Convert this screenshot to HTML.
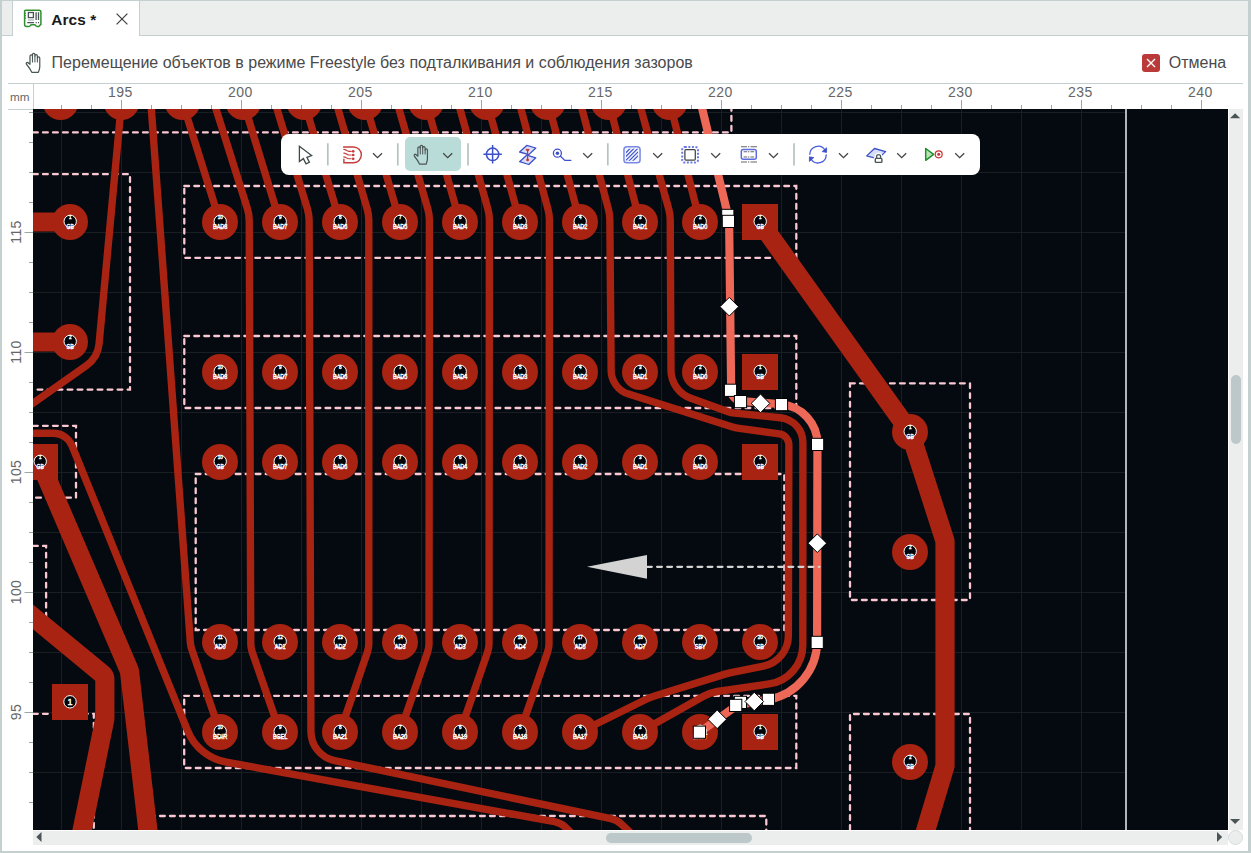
<!DOCTYPE html>
<html lang="ru">
<head>
<meta charset="utf-8">
<title>Arcs *</title>
<style>
*{box-sizing:border-box;margin:0;padding:0}
html,body{width:1251px;height:853px;overflow:hidden;background:#fff}
body{position:relative;font-family:"Liberation Sans",sans-serif;color:#444}
.abs{position:absolute}
.frame{left:0;top:0;width:1251px;height:853px;border-style:solid;border-color:#c4cfd0;border-width:1px 3px 2px 2px;pointer-events:none;z-index:9}
.tabbar{left:2px;top:1px;width:1246px;height:35px;background:#eceeed;border-bottom:1px solid #c4cfd0}
.tab{left:12px;top:1px;width:128px;height:35px;background:#fff;border-left:1px solid #c4cfd0;border-right:1px solid #c4cfd0}
  .tab .ttl{left:38.2px;top:9.8px;font-size:15.4px;letter-spacing:.1px;line-height:18px;font-weight:bold;color:#1a1a1a;white-space:nowrap}
.info{left:2px;top:36px;width:1246px;height:47px;background:#fff}
.info .msg{left:49.6px;top:18px;font-size:16px;line-height:18px;color:#4a4a4a;white-space:nowrap}
.info .cancel{left:1166.8px;top:18px;font-size:16px;line-height:18px;color:#4a4a4a;white-space:nowrap}
.info .xbtn{left:1140px;top:18px;width:18px;height:18px;border-radius:3px;background:#b93a38}
.hline{left:8px;top:83px;width:1235px;height:1px;background:#c4cfd0}
.cornerv{left:33px;top:84px;width:1px;height:25px;background:#c4cfd0}
.cornerh{left:8px;top:109px;width:25px;height:1px;background:#c4cfd0}
.cv{position:absolute;left:33px;top:109px}
.rul{position:absolute;left:0;top:0}
.vsb{left:1229px;top:109px;width:14px;height:721px;background:#eceeed}
.hsb{left:33px;top:831px;width:1195px;height:14px;background:#eceeed}
.vth{left:1231px;top:375px;width:10px;height:69px;border-radius:5px;background:#bcc8c9}
.hth{left:606px;top:833px;width:146px;height:10px;border-radius:5px;background:#bcc8c9}
.corner{left:1228px;top:830px;width:15px;height:15px;border-radius:50%;background:#eceeed;border:1px solid #d3dcdc}
.tb{left:281px;top:134px;width:698.5px;height:40.5px;background:#fff;border-radius:8px}
.tb .act{left:123.6px;top:3.4px;width:56.6px;height:33.8px;border-radius:5px;background:#badcd8}
.tb svg{position:absolute;left:0;top:0}
</style>
</head>
<body>
<div class="abs tabbar"></div>
<div class="abs tab">
  <svg class="abs" style="left:9.2px;top:7.3px" width="22" height="22" viewBox="0 0 22 22" fill="none">
    <path d="M3.6 2.3H16.9a2 2 0 0 1 2 2V16.4l-2.1 2.1H15.2c-.9 0-1.3-.4-1.6-1-.3-.5-.6-.8-1.2-.8H9.6c-.6 0-.9.3-1.2.8-.3.6-.7 1-1.6 1H4.6a2 2 0 0 1-2-2V3.3a1 1 0 0 1 1-1Z" stroke="#2e8f2e" stroke-width="1.5" fill="#fff"/>
    <path d="M2.6 5.3h1.3M2.6 7.7h1.3M2.6 10.1h1.3" stroke="#2e8f2e" stroke-width="1.2"/>
    <rect x="6.4" y="4.5" width="5" height="5.1" stroke="#4a5557" stroke-width="1.3"/>
    <path d="M14.1 4.3V11.9M16.5 4.3V11.9" stroke="#4a5557" stroke-width="1.3"/>
    <path d="M6 12h6" stroke="#9aa3a4" stroke-width="1"/>
    <path d="M5.2 14.7h6.8M13.6 14.7h1.2M16 14.7h1" stroke="#4a5557" stroke-width="1.2"/>
  </svg>
  <div class="abs ttl">Arcs *</div>
  <svg class="abs" style="left:102.4px;top:10.5px" width="14" height="14" viewBox="0 0 14 14"><path d="M1.6 1.6L12.4 12.4M12.4 1.6L1.6 12.4" stroke="#444" stroke-width="1.3" fill="none"/></svg>
</div>
<div class="abs info">
  <svg class="abs" style="left:21.5px;top:15px" width="19" height="24" viewBox="0 0 20 24" preserveAspectRatio="none" fill="none" stroke="#4a5656" stroke-width="1.3" stroke-linejoin="round" stroke-linecap="round">
    <path d="M6.3 13.2V5.2a1.3 1.3 0 0 1 2.6 0V3.7a1.3 1.3 0 0 1 2.6 0V5a1.3 1.3 0 0 1 2.6 0v2.2a1.25 1.25 0 0 1 2.5 0v8.6c0 2.2-.7 3.6-1.5 5.5H8.2C7 19 5 16 2.6 13.3c-.9-1.1.4-2.5 1.5-1.7L6.3 13.2Z" fill="#fff"/>
    <path d="M8.9 5.2V11M11.5 5V11M14.1 7.2V11" stroke-width="1.1"/>
  </svg>
  <div class="abs msg" id="msg">Перемещение объектов в режиме Freestyle без подталкивания и соблюдения зазоров</div>
  <div class="abs xbtn"><svg width="18" height="18" viewBox="0 0 18 18"><path d="M5 5L13 13M13 5L5 13" stroke="#fff" stroke-width="1.4" fill="none"/></svg></div>
  <div class="abs cancel">Отмена</div>
</div>
<div class="abs hline"></div>
<div class="abs cornerv"></div>
<div class="abs cornerh"></div>
<svg class="cv" width="1195" height="721" viewBox="33 109 1195 721"><rect x="33" y="109" width="1195" height="721" fill="#040a10"/><path d="M61.5 109V830M121.5 109V830M181.5 109V830M241.5 109V830M301.5 109V830M361.5 109V830M421.5 109V830M481.5 109V830M541.5 109V830M601.5 109V830M661.5 109V830M721.5 109V830M781.5 109V830M841.5 109V830M901.5 109V830M961.5 109V830M1021.5 109V830M1081.5 109V830M33 112.5H1126M33 172.5H1126M33 232.5H1126M33 292.5H1126M33 352.5H1126M33 412.5H1126M33 472.5H1126M33 532.5H1126M33 592.5H1126M33 652.5H1126M33 712.5H1126M33 772.5H1126" stroke="#181e21" stroke-width="1" fill="none"/><path d="M1126 109V830" stroke="#aeb6b7" stroke-width="2" fill="none"/><path d="M33 132.4H731.4V109M33 174.2H130V389.6H33M184.3 186H796.3V257.8H184.3ZM184.3 336H796.3V408H184.3ZM195.7 474H784.3V630H195.7ZM184.2 695.8H796.3V768H184.2ZM33 425.8H76V497.7H33M33 545.9H46.1V620M33 713.8H93.8V830M150 816H766.3V830M850 383.3H970V600H850ZM850 830V714H970V830" stroke="#fbc8d2" stroke-width="2.3" stroke-dasharray="4.8 5.2" stroke-linecap="round" fill="none"/><path d="M121.5 102L99.08 343.75A30 30 0 0 1 86.52 365.47L20 412.5M150.7 100L190.37 642.79A25 25 0 0 0 191.64 649.05L220 732M182.4 102L220 222M243.3 102L280 222M304.2 102L340 222M365.1 102L400 222M426 102L460 222M486.9 102L520 222M547.8 102L580 222M608.7 102L640 222M669.6 102L700 222M213.17 100L247.38 208.71A40 40 0 0 1 249.22 220.57L250.78 643.83A25 25 0 0 0 252.17 651.94L280 732M335.37 100L367.2 209.01A40 40 0 0 1 368.8 220.22L368.8 643.83A25 25 0 0 1 367.45 651.94L340 732M396.41 100L427.83 209.05A40 40 0 0 1 429.39 220.17L429 643.82A25 25 0 0 1 427.64 651.95L400 732M457.49 100L487.93 209.21A40 40 0 0 1 489.39 219.99L489 643.82A25 25 0 0 1 487.64 651.95L460 732M518.58 100L548.02 209.37A40 40 0 0 1 549.4 219.81L549 643.82A25 25 0 0 1 547.64 651.95L520 732M274.26 100L307.39 208.88A40 40 0 0 1 309.12 220.38L310.91 731.44A30 30 0 0 0 334.75 760.69L380 770.2L610.95 818.73A22 22 0 0 1 621.5 824.24L646 847.3M20 433.3L53.53 433.3A20 20 0 0 1 72.06 445.78L187.55 730.58A52 52 0 0 0 226.45 762.21L554.42 821.71A22 22 0 0 1 565.8 827.55L590 851M579.63 100L608.52 209.66A40 40 0 0 1 609.84 219.51L611.14 370.46A25 25 0 0 0 628.59 394.08L732.56 427.03A30 30 0 0 0 737.54 428.15L779.37 433.89A11 11 0 0 1 788.87 444.82L788.37 635.77A31 31 0 0 1 763.47 666.08L731.03 672.59A60 60 0 0 0 725.05 674.11L654.54 695.99A60 60 0 0 0 645.74 699.51L580 732M638.51 100L668.78 209.36A40 40 0 0 1 670.23 219.83L670.99 370.21A30 30 0 0 0 690.86 398.29L727.55 411.46A30 30 0 0 0 734.65 413.07L780.42 417.72A25 25 0 0 1 802.89 442.6L802.81 644.97A39.4 39.4 0 0 1 769.13 683.93L717.35 691.52A40 40 0 0 0 703.53 696.24L640 732" stroke="#a82311" stroke-width="7.4" fill="none" stroke-linecap="round" stroke-linejoin="round"/><path d="M20 222H70M20 342H70M20 606.1L102.3 674A7 7 0 0 1 104.85 679.4L104.85 718.29A7 7 0 0 1 104.71 719.69L78.9 846M40 462L128.83 669.36A10 10 0 0 1 129.57 672.15L149.6 845M760 222L910 432L945 541V766L921 846" stroke="#a82311" stroke-width="19.2" fill="none" stroke-linecap="round" stroke-linejoin="round"/><g fill="#a82311"><circle cx="60.6" cy="102" r="18"/><circle cx="121.5" cy="102" r="18"/><circle cx="182.4" cy="102" r="18"/><circle cx="243.3" cy="102" r="18"/><circle cx="304.2" cy="102" r="18"/><circle cx="365.1" cy="102" r="18"/><circle cx="426" cy="102" r="18"/><circle cx="486.9" cy="102" r="18"/><circle cx="547.8" cy="102" r="18"/><circle cx="608.7" cy="102" r="18"/><circle cx="669.6" cy="102" r="18"/><circle cx="220" cy="222" r="18"/><circle cx="280" cy="222" r="18"/><circle cx="340" cy="222" r="18"/><circle cx="400" cy="222" r="18"/><circle cx="460" cy="222" r="18"/><circle cx="520" cy="222" r="18"/><circle cx="580" cy="222" r="18"/><circle cx="640" cy="222" r="18"/><circle cx="700" cy="222" r="18"/><circle cx="220" cy="372" r="18"/><circle cx="280" cy="372" r="18"/><circle cx="340" cy="372" r="18"/><circle cx="400" cy="372" r="18"/><circle cx="460" cy="372" r="18"/><circle cx="520" cy="372" r="18"/><circle cx="580" cy="372" r="18"/><circle cx="640" cy="372" r="18"/><circle cx="700" cy="372" r="18"/><circle cx="220" cy="462" r="18"/><circle cx="280" cy="462" r="18"/><circle cx="340" cy="462" r="18"/><circle cx="400" cy="462" r="18"/><circle cx="460" cy="462" r="18"/><circle cx="520" cy="462" r="18"/><circle cx="580" cy="462" r="18"/><circle cx="640" cy="462" r="18"/><circle cx="700" cy="462" r="18"/><circle cx="220" cy="642" r="18"/><circle cx="280" cy="642" r="18"/><circle cx="340" cy="642" r="18"/><circle cx="400" cy="642" r="18"/><circle cx="460" cy="642" r="18"/><circle cx="520" cy="642" r="18"/><circle cx="580" cy="642" r="18"/><circle cx="640" cy="642" r="18"/><circle cx="700" cy="642" r="18"/><circle cx="220" cy="732" r="18"/><circle cx="280" cy="732" r="18"/><circle cx="340" cy="732" r="18"/><circle cx="400" cy="732" r="18"/><circle cx="460" cy="732" r="18"/><circle cx="520" cy="732" r="18"/><circle cx="580" cy="732" r="18"/><circle cx="640" cy="732" r="18"/><circle cx="700" cy="732" r="18"/><rect x="742" y="204" width="36" height="36"/><rect x="742" y="354" width="36" height="36"/><rect x="742" y="444" width="36" height="36"/><circle cx="760" cy="642" r="18"/><rect x="742" y="714" width="36" height="36"/><circle cx="70" cy="222" r="18"/><circle cx="70" cy="342" r="18"/><rect x="22" y="444" width="36" height="36"/><circle cx="910" cy="432" r="18"/><circle cx="910" cy="552" r="18"/><circle cx="910" cy="762" r="18"/><rect x="52" y="684" width="36" height="36"/></g><path d="M700.1 100L728.94 219.34A6 6 0 0 1 729.11 220.68L731.18 390.18A11 11 0 0 0 741.29 401.01L780.95 404.23A39.7 39.7 0 0 1 817.44 443.87L817.09 641.52A58.9 58.9 0 0 1 769.18 699.29L738.74 705.07A8 8 0 0 0 735.56 706.43L700 732" stroke="#ee6858" stroke-width="8.2" fill="none" stroke-linecap="round" stroke-linejoin="round"/><g fill="#02060a" stroke="#fff" stroke-width="1"><circle cx="220.2" cy="221.4" r="6.2"/><circle cx="280.2" cy="221.4" r="6.2"/><circle cx="340.2" cy="221.4" r="6.2"/><circle cx="400.2" cy="221.4" r="6.2"/><circle cx="460.2" cy="221.4" r="6.2"/><circle cx="520.2" cy="221.4" r="6.2"/><circle cx="580.2" cy="221.4" r="6.2"/><circle cx="640.2" cy="221.4" r="6.2"/><circle cx="700.2" cy="221.4" r="6.2"/><circle cx="220.2" cy="371.4" r="6.2"/><circle cx="280.2" cy="371.4" r="6.2"/><circle cx="340.2" cy="371.4" r="6.2"/><circle cx="400.2" cy="371.4" r="6.2"/><circle cx="460.2" cy="371.4" r="6.2"/><circle cx="520.2" cy="371.4" r="6.2"/><circle cx="580.2" cy="371.4" r="6.2"/><circle cx="640.2" cy="371.4" r="6.2"/><circle cx="700.2" cy="371.4" r="6.2"/><circle cx="220.2" cy="461.4" r="6.2"/><circle cx="280.2" cy="461.4" r="6.2"/><circle cx="340.2" cy="461.4" r="6.2"/><circle cx="400.2" cy="461.4" r="6.2"/><circle cx="460.2" cy="461.4" r="6.2"/><circle cx="520.2" cy="461.4" r="6.2"/><circle cx="580.2" cy="461.4" r="6.2"/><circle cx="640.2" cy="461.4" r="6.2"/><circle cx="700.2" cy="461.4" r="6.2"/><circle cx="220.2" cy="641.4" r="6.2"/><circle cx="280.2" cy="641.4" r="6.2"/><circle cx="340.2" cy="641.4" r="6.2"/><circle cx="400.2" cy="641.4" r="6.2"/><circle cx="460.2" cy="641.4" r="6.2"/><circle cx="520.2" cy="641.4" r="6.2"/><circle cx="580.2" cy="641.4" r="6.2"/><circle cx="640.2" cy="641.4" r="6.2"/><circle cx="700.2" cy="641.4" r="6.2"/><circle cx="220.2" cy="731.4" r="6.2"/><circle cx="280.2" cy="731.4" r="6.2"/><circle cx="340.2" cy="731.4" r="6.2"/><circle cx="400.2" cy="731.4" r="6.2"/><circle cx="460.2" cy="731.4" r="6.2"/><circle cx="520.2" cy="731.4" r="6.2"/><circle cx="580.2" cy="731.4" r="6.2"/><circle cx="640.2" cy="731.4" r="6.2"/><circle cx="700.2" cy="731.4" r="6.2"/><circle cx="760.2" cy="221.4" r="6.2"/><circle cx="760.2" cy="371.4" r="6.2"/><circle cx="760.2" cy="461.4" r="6.2"/><circle cx="760.2" cy="641.4" r="6.2"/><circle cx="760.2" cy="731.4" r="6.2"/><circle cx="70.2" cy="221.4" r="6.2"/><circle cx="70.2" cy="341.4" r="6.2"/><circle cx="40.2" cy="461.4" r="6.2"/><circle cx="910.2" cy="431.4" r="6.2"/><circle cx="910.2" cy="551.4" r="6.2"/><circle cx="910.2" cy="761.4" r="6.2"/><circle cx="70" cy="701.8" r="6.2"/></g><g fill="#fff" stroke="#fff" stroke-width=".45" text-anchor="middle" font-family="'Liberation Sans',sans-serif"><text x="220.2" y="219.4" font-size="5.2" textLength="5" lengthAdjust="spacingAndGlyphs">10</text><text x="220.2" y="228.9" font-size="7.8" textLength="14.4" lengthAdjust="spacingAndGlyphs">BAD8</text><text x="280.2" y="219.4" font-size="5.2" textLength="2.5" lengthAdjust="spacingAndGlyphs">9</text><text x="280.2" y="228.9" font-size="7.8" textLength="14.4" lengthAdjust="spacingAndGlyphs">BAD7</text><text x="340.2" y="219.4" font-size="5.2" textLength="2.5" lengthAdjust="spacingAndGlyphs">8</text><text x="340.2" y="228.9" font-size="7.8" textLength="14.4" lengthAdjust="spacingAndGlyphs">BAD6</text><text x="400.2" y="219.4" font-size="5.2" textLength="2.5" lengthAdjust="spacingAndGlyphs">7</text><text x="400.2" y="228.9" font-size="7.8" textLength="14.4" lengthAdjust="spacingAndGlyphs">BAD5</text><text x="460.2" y="219.4" font-size="5.2" textLength="2.5" lengthAdjust="spacingAndGlyphs">6</text><text x="460.2" y="228.9" font-size="7.8" textLength="14.4" lengthAdjust="spacingAndGlyphs">BAD4</text><text x="520.2" y="219.4" font-size="5.2" textLength="2.5" lengthAdjust="spacingAndGlyphs">5</text><text x="520.2" y="228.9" font-size="7.8" textLength="14.4" lengthAdjust="spacingAndGlyphs">BAD3</text><text x="580.2" y="219.4" font-size="5.2" textLength="2.5" lengthAdjust="spacingAndGlyphs">4</text><text x="580.2" y="228.9" font-size="7.8" textLength="14.4" lengthAdjust="spacingAndGlyphs">BAD2</text><text x="640.2" y="219.4" font-size="5.2" textLength="2.5" lengthAdjust="spacingAndGlyphs">3</text><text x="640.2" y="228.9" font-size="7.8" textLength="14.4" lengthAdjust="spacingAndGlyphs">BAD1</text><text x="700.2" y="219.4" font-size="5.2" textLength="2.5" lengthAdjust="spacingAndGlyphs">2</text><text x="700.2" y="228.9" font-size="7.8" textLength="14.4" lengthAdjust="spacingAndGlyphs">BAD0</text><text x="220.2" y="369.4" font-size="5.2" textLength="5" lengthAdjust="spacingAndGlyphs">10</text><text x="220.2" y="378.9" font-size="7.8" textLength="14.4" lengthAdjust="spacingAndGlyphs">BAD8</text><text x="280.2" y="369.4" font-size="5.2" textLength="2.5" lengthAdjust="spacingAndGlyphs">9</text><text x="280.2" y="378.9" font-size="7.8" textLength="14.4" lengthAdjust="spacingAndGlyphs">BAD7</text><text x="340.2" y="369.4" font-size="5.2" textLength="2.5" lengthAdjust="spacingAndGlyphs">8</text><text x="340.2" y="378.9" font-size="7.8" textLength="14.4" lengthAdjust="spacingAndGlyphs">BAD6</text><text x="400.2" y="369.4" font-size="5.2" textLength="2.5" lengthAdjust="spacingAndGlyphs">7</text><text x="400.2" y="378.9" font-size="7.8" textLength="14.4" lengthAdjust="spacingAndGlyphs">BAD5</text><text x="460.2" y="369.4" font-size="5.2" textLength="2.5" lengthAdjust="spacingAndGlyphs">6</text><text x="460.2" y="378.9" font-size="7.8" textLength="14.4" lengthAdjust="spacingAndGlyphs">BAD4</text><text x="520.2" y="369.4" font-size="5.2" textLength="2.5" lengthAdjust="spacingAndGlyphs">5</text><text x="520.2" y="378.9" font-size="7.8" textLength="14.4" lengthAdjust="spacingAndGlyphs">BAD3</text><text x="580.2" y="369.4" font-size="5.2" textLength="2.5" lengthAdjust="spacingAndGlyphs">4</text><text x="580.2" y="378.9" font-size="7.8" textLength="14.4" lengthAdjust="spacingAndGlyphs">BAD2</text><text x="640.2" y="369.4" font-size="5.2" textLength="2.5" lengthAdjust="spacingAndGlyphs">3</text><text x="640.2" y="378.9" font-size="7.8" textLength="14.4" lengthAdjust="spacingAndGlyphs">BAD1</text><text x="700.2" y="369.4" font-size="5.2" textLength="2.5" lengthAdjust="spacingAndGlyphs">2</text><text x="700.2" y="378.9" font-size="7.8" textLength="14.4" lengthAdjust="spacingAndGlyphs">BAD0</text><text x="220.2" y="459.4" font-size="5.2" textLength="5" lengthAdjust="spacingAndGlyphs">10</text><text x="220.2" y="468.9" font-size="7.8" textLength="7.2" lengthAdjust="spacingAndGlyphs">GB</text><text x="280.2" y="459.4" font-size="5.2" textLength="2.5" lengthAdjust="spacingAndGlyphs">9</text><text x="280.2" y="468.9" font-size="7.8" textLength="14.4" lengthAdjust="spacingAndGlyphs">BAD7</text><text x="340.2" y="459.4" font-size="5.2" textLength="2.5" lengthAdjust="spacingAndGlyphs">8</text><text x="340.2" y="468.9" font-size="7.8" textLength="14.4" lengthAdjust="spacingAndGlyphs">BAD6</text><text x="400.2" y="459.4" font-size="5.2" textLength="2.5" lengthAdjust="spacingAndGlyphs">7</text><text x="400.2" y="468.9" font-size="7.8" textLength="14.4" lengthAdjust="spacingAndGlyphs">BAD5</text><text x="460.2" y="459.4" font-size="5.2" textLength="2.5" lengthAdjust="spacingAndGlyphs">6</text><text x="460.2" y="468.9" font-size="7.8" textLength="14.4" lengthAdjust="spacingAndGlyphs">BAD4</text><text x="520.2" y="459.4" font-size="5.2" textLength="2.5" lengthAdjust="spacingAndGlyphs">5</text><text x="520.2" y="468.9" font-size="7.8" textLength="14.4" lengthAdjust="spacingAndGlyphs">BAD3</text><text x="580.2" y="459.4" font-size="5.2" textLength="2.5" lengthAdjust="spacingAndGlyphs">4</text><text x="580.2" y="468.9" font-size="7.8" textLength="14.4" lengthAdjust="spacingAndGlyphs">BAD2</text><text x="640.2" y="459.4" font-size="5.2" textLength="2.5" lengthAdjust="spacingAndGlyphs">3</text><text x="640.2" y="468.9" font-size="7.8" textLength="14.4" lengthAdjust="spacingAndGlyphs">BAD1</text><text x="700.2" y="459.4" font-size="5.2" textLength="2.5" lengthAdjust="spacingAndGlyphs">2</text><text x="700.2" y="468.9" font-size="7.8" textLength="14.4" lengthAdjust="spacingAndGlyphs">BAD0</text><text x="220.2" y="639.4" font-size="5.2" textLength="5" lengthAdjust="spacingAndGlyphs">11</text><text x="220.2" y="648.9" font-size="7.8" textLength="10.8" lengthAdjust="spacingAndGlyphs">AD0</text><text x="280.2" y="639.4" font-size="5.2" textLength="5" lengthAdjust="spacingAndGlyphs">12</text><text x="280.2" y="648.9" font-size="7.8" textLength="10.8" lengthAdjust="spacingAndGlyphs">AD1</text><text x="340.2" y="639.4" font-size="5.2" textLength="5" lengthAdjust="spacingAndGlyphs">13</text><text x="340.2" y="648.9" font-size="7.8" textLength="10.8" lengthAdjust="spacingAndGlyphs">AD2</text><text x="400.2" y="639.4" font-size="5.2" textLength="5" lengthAdjust="spacingAndGlyphs">14</text><text x="400.2" y="648.9" font-size="7.8" textLength="10.8" lengthAdjust="spacingAndGlyphs">AD3</text><text x="460.2" y="639.4" font-size="5.2" textLength="5" lengthAdjust="spacingAndGlyphs">15</text><text x="460.2" y="648.9" font-size="7.8" textLength="10.8" lengthAdjust="spacingAndGlyphs">AD3</text><text x="520.2" y="639.4" font-size="5.2" textLength="5" lengthAdjust="spacingAndGlyphs">16</text><text x="520.2" y="648.9" font-size="7.8" textLength="10.8" lengthAdjust="spacingAndGlyphs">AD4</text><text x="580.2" y="639.4" font-size="5.2" textLength="5" lengthAdjust="spacingAndGlyphs">17</text><text x="580.2" y="648.9" font-size="7.8" textLength="10.8" lengthAdjust="spacingAndGlyphs">AD5</text><text x="640.2" y="639.4" font-size="5.2" textLength="5" lengthAdjust="spacingAndGlyphs">18</text><text x="640.2" y="648.9" font-size="7.8" textLength="10.8" lengthAdjust="spacingAndGlyphs">AD7</text><text x="700.2" y="639.4" font-size="5.2" textLength="5" lengthAdjust="spacingAndGlyphs">19</text><text x="700.2" y="648.9" font-size="7.8" textLength="10.8" lengthAdjust="spacingAndGlyphs">SBY</text><text x="220.2" y="729.4" font-size="5.2" textLength="5" lengthAdjust="spacingAndGlyphs">10</text><text x="220.2" y="738.9" font-size="7.8" textLength="14.4" lengthAdjust="spacingAndGlyphs">BDIR</text><text x="280.2" y="729.4" font-size="5.2" textLength="2.5" lengthAdjust="spacingAndGlyphs">9</text><text x="280.2" y="738.9" font-size="7.8" textLength="14.4" lengthAdjust="spacingAndGlyphs">BSEL</text><text x="340.2" y="729.4" font-size="5.2" textLength="2.5" lengthAdjust="spacingAndGlyphs">8</text><text x="340.2" y="738.9" font-size="7.8" textLength="14.4" lengthAdjust="spacingAndGlyphs">BA21</text><text x="400.2" y="729.4" font-size="5.2" textLength="2.5" lengthAdjust="spacingAndGlyphs">7</text><text x="400.2" y="738.9" font-size="7.8" textLength="14.4" lengthAdjust="spacingAndGlyphs">BA20</text><text x="460.2" y="729.4" font-size="5.2" textLength="2.5" lengthAdjust="spacingAndGlyphs">6</text><text x="460.2" y="738.9" font-size="7.8" textLength="14.4" lengthAdjust="spacingAndGlyphs">BA19</text><text x="520.2" y="729.4" font-size="5.2" textLength="2.5" lengthAdjust="spacingAndGlyphs">5</text><text x="520.2" y="738.9" font-size="7.8" textLength="14.4" lengthAdjust="spacingAndGlyphs">BA18</text><text x="580.2" y="729.4" font-size="5.2" textLength="2.5" lengthAdjust="spacingAndGlyphs">4</text><text x="580.2" y="738.9" font-size="7.8" textLength="14.4" lengthAdjust="spacingAndGlyphs">BA17</text><text x="640.2" y="729.4" font-size="5.2" textLength="2.5" lengthAdjust="spacingAndGlyphs">3</text><text x="640.2" y="738.9" font-size="7.8" textLength="14.4" lengthAdjust="spacingAndGlyphs">BA16</text><text x="700.2" y="729.4" font-size="5.2" textLength="2.5" lengthAdjust="spacingAndGlyphs">2</text><text x="700.2" y="738.9" font-size="7.8" textLength="14.4" lengthAdjust="spacingAndGlyphs">BRST</text><text x="760.2" y="219.4" font-size="5.2" textLength="2.5" lengthAdjust="spacingAndGlyphs">1</text><text x="760.2" y="228.9" font-size="7.8" textLength="7.2" lengthAdjust="spacingAndGlyphs">GB</text><text x="760.2" y="369.4" font-size="5.2" textLength="2.5" lengthAdjust="spacingAndGlyphs">1</text><text x="760.2" y="378.9" font-size="7.8" textLength="7.2" lengthAdjust="spacingAndGlyphs">SB</text><text x="760.2" y="459.4" font-size="5.2" textLength="2.5" lengthAdjust="spacingAndGlyphs">1</text><text x="760.2" y="468.9" font-size="7.8" textLength="7.2" lengthAdjust="spacingAndGlyphs">GB</text><text x="760.2" y="639.4" font-size="5.2" textLength="5" lengthAdjust="spacingAndGlyphs">20</text><text x="760.2" y="648.9" font-size="7.8" textLength="7.2" lengthAdjust="spacingAndGlyphs">SB</text><text x="760.2" y="729.4" font-size="5.2" textLength="2.5" lengthAdjust="spacingAndGlyphs">1</text><text x="760.2" y="738.9" font-size="7.8" textLength="7.2" lengthAdjust="spacingAndGlyphs">SB</text><text x="70.2" y="219.4" font-size="5.2" textLength="2.5" lengthAdjust="spacingAndGlyphs">1</text><text x="70.2" y="228.9" font-size="7.8" textLength="7.2" lengthAdjust="spacingAndGlyphs">GB</text><text x="70.2" y="339.4" font-size="5.2" textLength="2.5" lengthAdjust="spacingAndGlyphs">2</text><text x="70.2" y="348.9" font-size="7.8" textLength="7.2" lengthAdjust="spacingAndGlyphs">SB</text><text x="40.2" y="459.4" font-size="5.2" textLength="2.5" lengthAdjust="spacingAndGlyphs">1</text><text x="40.2" y="468.9" font-size="7.8" textLength="7.2" lengthAdjust="spacingAndGlyphs">GB</text><text x="910.2" y="429.4" font-size="5.2" textLength="2.5" lengthAdjust="spacingAndGlyphs">1</text><text x="910.2" y="438.9" font-size="7.8" textLength="7.2" lengthAdjust="spacingAndGlyphs">GB</text><text x="910.2" y="549.4" font-size="5.2" textLength="2.5" lengthAdjust="spacingAndGlyphs">2</text><text x="910.2" y="558.9" font-size="7.8" textLength="7.2" lengthAdjust="spacingAndGlyphs">SB</text><text x="910.2" y="759.4" font-size="5.2" textLength="2.5" lengthAdjust="spacingAndGlyphs">2</text><text x="910.2" y="768.9" font-size="7.8" textLength="7.2" lengthAdjust="spacingAndGlyphs">SB</text><text x="70" y="705" font-size="9">1</text></g><path d="M647 566.8H819.5" stroke="#d3d3d3" stroke-width="2.3" stroke-dasharray="4.8 5.3" stroke-linecap="round" fill="none"/><path d="M587 566.8L647 555V578.8Z" fill="#d3d3d3"/><g fill="#fff" stroke="#000" stroke-width="1"><rect x="721.7" y="209.3" width="12.2" height="12.2"/><rect x="722.3" y="215.3" width="12.2" height="12.2"/><rect x="724.4" y="384.2" width="12.2" height="12.2"/><rect x="734.4" y="395.5" width="12.2" height="12.2"/><rect x="775.4" y="398.5" width="12.2" height="12.2"/><rect x="811.5" y="438.3" width="12.2" height="12.2"/><rect x="811.1" y="636.3" width="12.2" height="12.2"/><rect x="762.3" y="693.2" width="12.2" height="12.2"/><rect x="734.3" y="696.3" width="12.2" height="12.2"/><rect x="729.6" y="699.3" width="12.2" height="12.2"/><rect x="693.3" y="726.1" width="12.2" height="12.2"/><path d="M729.3 297.4l9.3 9.3l-9.3 9.3l-9.3 -9.3z"/><path d="M760.5 394.1l9.3 9.3l-9.3 9.3l-9.3 -9.3z"/><path d="M817.3 533.9l9.3 9.3l-9.3 9.3l-9.3 -9.3z"/><path d="M754.3 692.2l9.3 9.3l-9.3 9.3l-9.3 -9.3z"/><path d="M717.2 710l9.3 9.3l-9.3 9.3l-9.3 -9.3z"/></g></svg>
<svg class="rul" width="1251" height="853" viewBox="0 0 1251 853"><path d="M61.5 105V109M91.5 105V109M121.5 100V109M151.5 105V109M181.5 105V109M211.5 105V109M241.5 100V109M271.5 105V109M301.5 105V109M331.5 105V109M361.5 100V109M391.5 105V109M421.5 105V109M451.5 105V109M481.5 100V109M511.5 105V109M541.5 105V109M571.5 105V109M601.5 100V109M631.5 105V109M661.5 105V109M691.5 105V109M721.5 100V109M751.5 105V109M781.5 105V109M811.5 105V109M841.5 100V109M871.5 105V109M901.5 105V109M931.5 105V109M961.5 100V109M991.5 105V109M1021.5 105V109M1051.5 105V109M1081.5 100V109M1111.5 105V109M1141.5 105V109M1171.5 105V109M1201.5 100V109M29 112.5H33M29 142.5H33M29 172.5H33M29 202.5H33M24.5 232.5H33M29 262.5H33M29 292.5H33M29 322.5H33M24.5 352.5H33M29 382.5H33M29 412.5H33M29 442.5H33M24.5 472.5H33M29 502.5H33M29 532.5H33M29 562.5H33M24.5 592.5H33M29 622.5H33M29 652.5H33M29 682.5H33M24.5 712.5H33M29 742.5H33M29 772.5H33M29 802.5H33" stroke="#9ca7a8" stroke-width="1" fill="none"/><g font-family="'Liberation Sans',sans-serif" font-size="14" letter-spacing=".4" fill="#666"><text x="120.3" y="96.8" text-anchor="middle">195</text><text x="240.3" y="96.8" text-anchor="middle">200</text><text x="360.3" y="96.8" text-anchor="middle">205</text><text x="480.3" y="96.8" text-anchor="middle">210</text><text x="600.3" y="96.8" text-anchor="middle">215</text><text x="720.3" y="96.8" text-anchor="middle">220</text><text x="840.3" y="96.8" text-anchor="middle">225</text><text x="960.3" y="96.8" text-anchor="middle">230</text><text x="1080.3" y="96.8" text-anchor="middle">235</text><text x="1200.3" y="96.8" text-anchor="middle">240</text><text transform="translate(21 232) rotate(-90)" text-anchor="middle">115</text><text transform="translate(21 352) rotate(-90)" text-anchor="middle">110</text><text transform="translate(21 472) rotate(-90)" text-anchor="middle">105</text><text transform="translate(21 592) rotate(-90)" text-anchor="middle">100</text><text transform="translate(21 712) rotate(-90)" text-anchor="middle">95</text></g><text x="10" y="100.8" font-family="'Liberation Sans',sans-serif" font-size="11.7" fill="#666">mm</text></svg>
<div class="abs vsb"></div>
<div class="abs hsb"></div>
<div class="abs vth"></div>
<div class="abs hth"></div>
<div class="abs corner"></div>
<svg class="abs" style="left:0;top:0" width="1251" height="853" viewBox="0 0 1251 853"><g fill="#4a5454"><path d="M1230 118.2L1235.1 113.2L1240.2 118.2Z"/><path d="M1230 819L1240.2 819L1235.1 824Z"/><path d="M1217 832V842L1222.2 837Z"/><path d="M41.5 832V842L36.3 837Z"/></g></svg>
<div class="abs tb">
  <div class="abs act"></div>
<svg width="699" height="41" viewBox="281 134 699 41" fill="none">
<defs>
<clipPath id="hc"><rect x="626" y="148.8" width="12" height="12"/></clipPath>
</defs>
<!-- separators -->
<path d="M327.8 143.3V165.6M397.8 143.3V165.6M468 143.3V165.6M607.8 143.3V165.6M794 143.3V165.6" stroke="#b6c2c2" stroke-width="1.7"/>
<!-- chevrons -->
<path d="M373 153.2l4.5 4.4l4.5-4.4M443.2 153.2l4.5 4.4l4.5-4.4M583.2 153.2l4.5 4.4l4.5-4.4M653.2 153.2l4.5 4.4l4.5-4.4M711.2 153.2l4.5 4.4l4.5-4.4M769 153.2l4.5 4.4l4.5-4.4M839 153.2l4.5 4.4l4.5-4.4M897.2 153.2l4.5 4.4l4.5-4.4M955.2 153.2l4.5 4.4l4.5-4.4" stroke="#444" stroke-width="1.3"/>
<!-- cursor -->
<path d="M299.4 146.3V161.5L303.4 158.6L306 163.9L309.4 162.3L306.9 157.3L311.6 155.6Z" stroke="#3e4a4a" stroke-width="1.3" stroke-linejoin="miter" fill="#fff"/>
<!-- route icon -->
<g stroke="#c63c3c" stroke-width="1.4" stroke-linecap="round">
<path d="M343.6 147H353.5a7.85 7.85 0 0 1 0 15.7H343.9V159.2"/>
<path d="M343.8 149.3c2.4 0 2.8 2 5 2h2.4M343.8 153.1c2.4 0 2.8 1.9 5 1.9h2.4M343.8 156.9c2.4 0 2.8 1.9 5 1.9h2.4" stroke-width="1.15"/>
</g>
<g fill="#c63c3c"><circle cx="353.2" cy="151.3" r="1.35"/><circle cx="353.2" cy="155" r="1.35"/><circle cx="353.2" cy="158.8" r="1.35"/></g>
<!-- hand -->
<g transform="translate(412 142.9) scale(.93 1)" stroke="#4a5656" stroke-width="1.3" stroke-linejoin="round" stroke-linecap="round">
<path d="M6.3 13.2V5.2a1.3 1.3 0 0 1 2.6 0V3.7a1.3 1.3 0 0 1 2.6 0V5a1.3 1.3 0 0 1 2.6 0v2.2a1.25 1.25 0 0 1 2.5 0v8.6c0 2.2-.7 3.6-1.5 5.5H8.2C7 19 5 16 2.6 13.3c-.9-1.1.4-2.5 1.5-1.7L6.3 13.2Z"/>
<path d="M8.9 5.2V11M11.5 5V11M14.1 7.2V11" stroke-width="1.1"/>
</g>
<!-- crosshair -->
<g stroke="#3d50c8" stroke-width="1.5"><circle cx="492.6" cy="154.3" r="6.2"/><path d="M483.4 154.3H501.8M492.6 145.1V163.5"/></g>
<!-- layers -->
<g stroke="#3d50c8" stroke-width="1.3" stroke-linejoin="round" fill="#d8defa">
<path d="M519.6 161.7L526.7 155.2L535.8 157.8L528.8 164.5Z"/>
<path d="M519.6 152L526.7 145.4L535.8 148L528.8 154.6Z"/>
</g>
<path d="M527.6 150.5V159.8" stroke="#c63030" stroke-width="1.1"/>
<path d="M526 149.3h3.2l-1.6 2.4z" fill="#c63030" stroke="#c63030" stroke-width=".8" stroke-linejoin="round"/>
<circle cx="527.6" cy="159.9" r="1.4" fill="#c63030"/>
<!-- probe -->
<g stroke="#3d50c8" stroke-width="1.3"><circle cx="557.4" cy="153.2" r="4"/><path d="M560.5 156.3L564.8 160.4H570.8" stroke-linecap="round" stroke-linejoin="round"/></g>
<circle cx="557.4" cy="153.2" r="1.7" fill="#3d50c8"/>
<!-- hatch -->
<rect x="623.95" y="146.75" width="16.1" height="16.1" rx="2.8" stroke="#7b89e6" stroke-width="1.5" fill="#f1f3fe"/>
<g clip-path="url(#hc)" stroke="#3d50c8" stroke-width="1.15"><path d="M622 156.6L634 144.6M622 160.4L638 144.4M624 162.2L640 146.2M627.8 162.2L641.8 148.2M631.6 162.2L643.6 150.2"/></g>
<!-- dotted square -->
<rect x="682.2" y="147" width="15.8" height="15.6" rx="2.6" stroke="#6b7ae6" stroke-width="2" stroke-dasharray="2 1.55"/>
<rect x="684.9" y="149.7" width="10.4" height="10.3" rx="1" stroke="#444" stroke-width="1.25" fill="#fff"/>
<!-- rows icon -->
<rect x="741.3" y="149.5" width="15" height="9.7" rx="2" stroke="#5c6ce0" stroke-width="1.5" fill="#fff"/>
<path d="M741 146.7h6M748 146.7h1.3M750.5 146.7h6.5M741 162h6M748 162h1.3M750.5 162h6.5M743.6 151.8h3.6M748 151.8h1.3M750.5 151.8h3.6M743.6 157h3.6M748 157h1.3M750.5 157h3.6" stroke="#666" stroke-width="1.1"/>
<!-- refresh -->
<g stroke="#4a5dd8" stroke-width="1.35" stroke-linecap="round">
<path d="M809.8 154.2A8.2 8.2 0 0 1 825 150.2"/>
<path d="M826.2 155A8.2 8.2 0 0 1 811 159"/>
</g>
<path d="M822.2 151.6L826.6 147.8V152.4Z" fill="#3d50c8" stroke="#3d50c8" stroke-width=".8" stroke-linejoin="round"/>
<path d="M813.8 157.6L809.4 161.4V156.8Z" fill="#3d50c8" stroke="#3d50c8" stroke-width=".8" stroke-linejoin="round"/>
<!-- layer lock -->
<path d="M866.7 155.9L874.5 148.5L885.6 151.6L878 158.9Z" stroke="#3d50c8" stroke-width="1.3" stroke-linejoin="round" fill="#d8defa"/>
<path d="M876.6 158.2V156.6a2 2 0 0 1 4 0V158.2" stroke="#fff" stroke-width="3.6"/><rect x="875.3" y="158.4" width="6.6" height="4" rx=".8" stroke="#fff" stroke-width="3.6" fill="#fff"/>
<path d="M876.6 158.2V156.6a2 2 0 0 1 4 0V158.2" stroke="#4a5555" stroke-width="1.4"/>
<rect x="875.3" y="158.4" width="6.6" height="4" rx=".8" stroke="#4a5555" stroke-width="1.4" fill="#fff"/>
<!-- play -->
<path d="M925.7 148.5V160.3L933.6 154.4Z" stroke="#1f8f27" stroke-width="1.5" stroke-linejoin="round" fill="#b9e3b9"/>
<circle cx="938.7" cy="154.3" r="3.5" stroke="#c83232" stroke-width="1.2"/>
<circle cx="938.7" cy="154.3" r="1.5" fill="#c83232"/>
</svg>

</div>
<div class="abs frame"></div>
</body>
</html>
